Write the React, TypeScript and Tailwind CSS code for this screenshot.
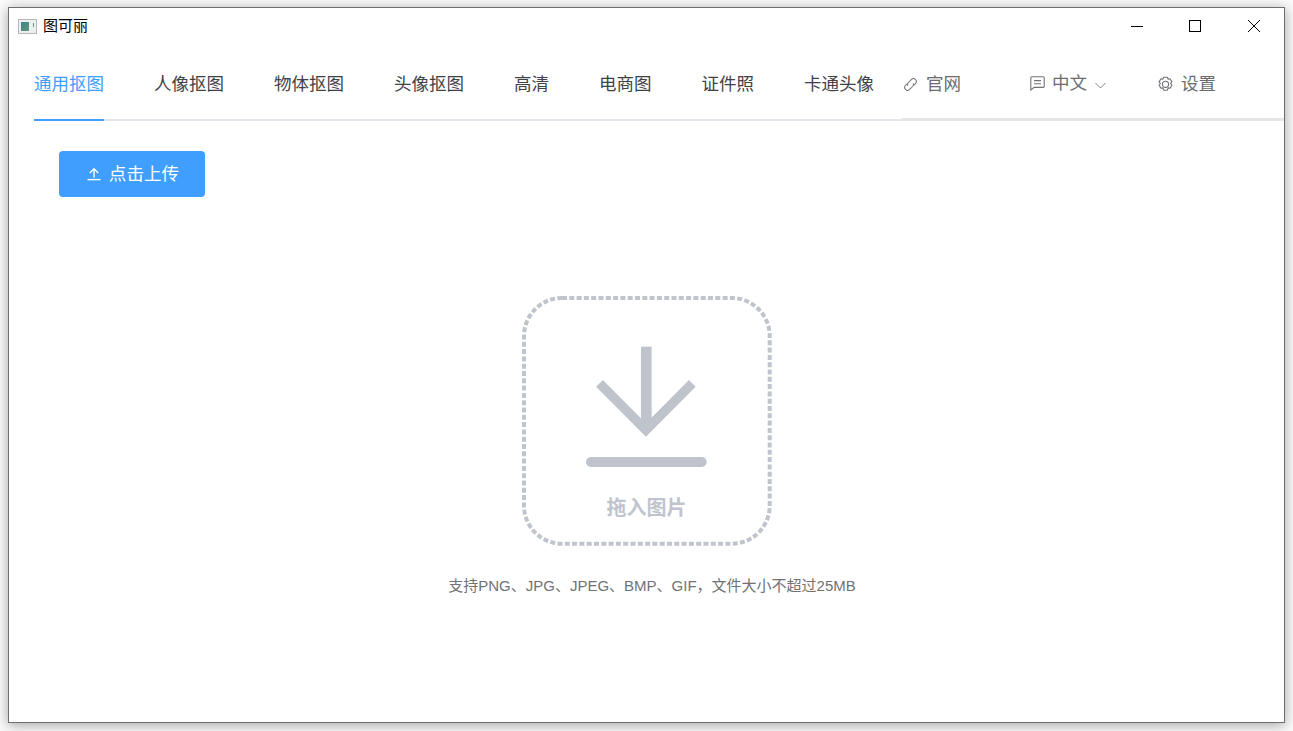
const tabs = ["通用抠图", "人像抠图", "物体抠图", "头像抠图", "高清", "电商图", "证件照", "卡通头像"];

function AppIcon() {
  return (
    <div className="flex h-[15px] w-[19px] items-stretch border border-[#b4b8bc] bg-[#eef0f0] p-[2px]">
      <div className="w-[10px] bg-gradient-to-br from-[#3f7f8c] to-[#5f9a78]" />
      <div className="ml-[4px] mt-[1px] h-[4px] w-[1px] bg-[#5f9a78]" />
    </div>
  );
}

function UploadIcon() {
  return (
    <svg width="14" height="14" viewBox="0 0 14 14" fill="none" stroke="white" strokeWidth="1.4">
      <path d="M0.5 12.6h13" />
      <path d="M7 10.5V2" />
      <path d="M2.8 6L7 1.8 11.2 6" />
    </svg>
  );
}

function LinkIcon() {
  return (
    <svg width="15" height="15" viewBox="0 0 15 15" fill="none" stroke="#707276" strokeWidth="1">
      <g transform="rotate(-45 7.5 7.5)">
        <path d="M6 4.6H3.4a2.9 2.9 0 0 0 0 5.8h4.2a2.9 2.9 0 0 0 2.6-1.8" />
        <path d="M9 10.4h2.6a2.9 2.9 0 0 0 0-5.8H7.4a2.9 2.9 0 0 0-2.6 1.8" />
      </g>
    </svg>
  );
}

function ChatIcon() {
  return (
    <svg width="15" height="15" viewBox="0 0 15 15" fill="none" stroke="#707276" strokeWidth="1.1">
      <path d="M2 .8h11a1.2 1.2 0 0 1 1.2 1.2v8.2a1.2 1.2 0 0 1-1.2 1.2H4.2L.8 14V2A1.2 1.2 0 0 1 2 .8z" />
      <path d="M4 4.6h7M4 7.8h7" />
    </svg>
  );
}

function CaretIcon() {
  return (
    <svg width="11" height="7" viewBox="0 0 11 7" fill="none" stroke="#808388" strokeWidth="1">
      <path d="M.5 1l5 5 5-5" />
    </svg>
  );
}

function GearIcon() {
  return (
    <svg width="17" height="17" viewBox="0 0 17 17" fill="none" stroke="#707276" strokeWidth="1.1">
      <path d="M6.6 1.2h3.8l.7 1.9 1.9-.4 1.9 3.2-1.3 1.6 1.3 1.6-1.9 3.2-1.9-.4-.7 2.3H6.6l-.7-2.3-1.9.4-1.9-3.2 1.3-1.6-1.3-1.6L4 2.7l1.9.4z" strokeLinejoin="round" />
      <circle cx="8.5" cy="8.3" r="3.1" />
    </svg>
  );
}

function DropBox() {
  return (
    <div className="relative ml-[1px] flex h-[250px] w-[250px] flex-col items-center">
      <svg className="absolute inset-0" width="250" height="250" viewBox="0 0 250 250" fill="none">
        <rect
          x="2"
          y="2"
          width="245.7"
          height="245.7"
          rx="38"
          stroke="#c0c4cc"
          strokeWidth="4"
          strokeDasharray="5 2.3"
        />
        <path d="M124.3 50.7V131" stroke="#bec3cc" strokeWidth="10.7" />
        <path d="M77.5 87.3L123.9 134l46.4-46.7" stroke="#bec3cc" strokeWidth="9.5" />
        <rect x="64" y="161" width="120.7" height="10" rx="5" fill="#bec3cc" />
      </svg>
      <span className="mt-[198px] text-[20px] font-bold leading-[28px] text-[#bfc4cd]">拖入图片</span>
    </div>
  );
}

export default function App() {
  return (
    <div
      className="h-[731px] w-[1293px] overflow-hidden bg-[#fafafa] pb-2 pl-2 pr-2 pt-[7px]"
      style={{ fontFamily: '"Liberation Sans", "Noto Sans CJK SC", sans-serif' }}
    >
      <div className="flex h-[716px] flex-col border border-[#6e6e6e] bg-white shadow-[0_2px_12px_rgba(0,0,0,0.35)]">
        {/* Title bar */}
        <div className="flex h-[36px] items-center pl-[9px]">
          <AppIcon />
          <span className="-mt-[2px] ml-[6px] text-[15px] leading-none text-black">图可丽</span>
          <div className="ml-auto flex items-center pr-[24px]">
            <div className="h-px w-[12px] bg-black" />
            <div className="ml-[46px] h-[12px] w-[12px] border border-black" />
            <svg className="ml-[47px]" width="12" height="12" viewBox="0 0 12 12" stroke="black" strokeWidth="1">
              <path d="M0 0l12 12M12 0L0 12" />
            </svg>
          </div>
        </div>

        {/* Nav */}
        <div className="flex h-[77px]">
          <div className="ml-[25px] flex w-[867px] gap-[50px] border-b-2 border-[#e4e7ed]">
            {tabs.map((tab, idx) => (
              <div
                key={tab}
                className={`-mb-[2px] flex h-[77px] items-center border-b-2 pt-[6px] text-[17.5px] ${
                  idx === 0 ? "border-[#409eff] text-[#409eff]" : "border-transparent text-[#404246]"
                }`}
              >
                {tab}
              </div>
            ))}
          </div>
          <div className="flex flex-1 items-center border-b-[3px] border-[#e6e6e6] pt-[6px] text-[17.5px] text-[#6a6c70]">
            <span className="ml-[2px]">
              <LinkIcon />
            </span>
            <span className="ml-[8px]">官网</span>
            <span className="ml-[69px] -mt-[2px]">
              <ChatIcon />
            </span>
            <span className="ml-[7px] -mt-[2px]">中文</span>
            <span className="ml-[8px] mt-[2px]">
              <CaretIcon />
            </span>
            <span className="ml-[51px]">
              <GearIcon />
            </span>
            <span className="ml-[7px]">设置</span>
          </div>
        </div>

        {/* Content */}
        <div className="flex flex-1 flex-col pt-[30px]">
          <button className="ml-[50px] flex h-[46px] w-[146px] items-center justify-center gap-[8px] rounded-[4px] bg-[#409eff] pl-[2px] text-[17.6px] text-white">
            <UploadIcon />
            点击上传
          </button>
          <div className="mt-[99px] flex flex-col items-center pr-[1px]">
            <DropBox />
            <p className="ml-[12px] mt-[30px] text-[15px] leading-[20px] text-[#707276]">
              支持PNG、JPG、JPEG、BMP、GIF，文件大小不超过25MB
            </p>
          </div>
        </div>
      </div>
    </div>
  );
}
